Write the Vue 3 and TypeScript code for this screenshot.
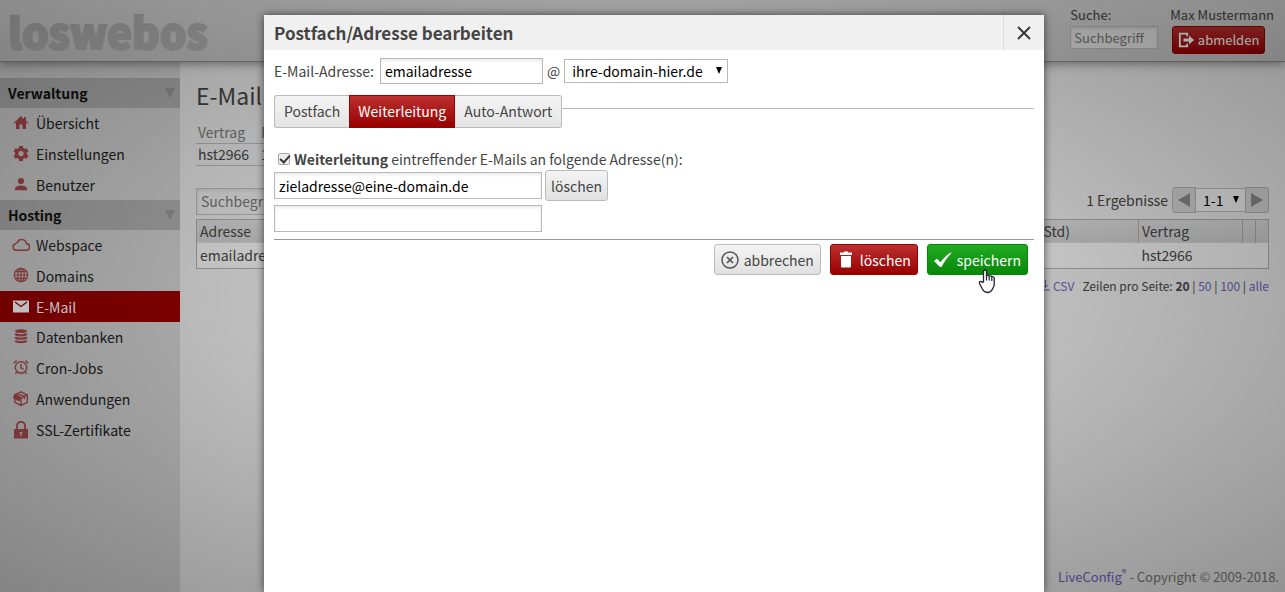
<script setup lang="ts">
import { ref } from 'vue'

type Item = { label: string; icon: string; active?: boolean }
type Group = { title: string; items: Item[] }

const groups: Group[] = [
  {
    title: 'Verwaltung',
    items: [
      { label: 'Übersicht', icon: 'home' },
      { label: 'Einstellungen', icon: 'gear' },
      { label: 'Benutzer', icon: 'user' },
    ],
  },
  {
    title: 'Hosting',
    items: [
      { label: 'Webspace', icon: 'cloud' },
      { label: 'Domains', icon: 'globe' },
      { label: 'E-Mail', icon: 'mail', active: true },
      { label: 'Datenbanken', icon: 'database' },
      { label: 'Cron-Jobs', icon: 'clock' },
      { label: 'Anwendungen', icon: 'box' },
      { label: 'SSL-Zertifikate', icon: 'lock' },
    ],
  },
]

const mailbox = ref('emailadresse')
const domain = ref('ihre-domain-hier.de')
const forward = ref(true)
const target = ref('zieladresse@eine-domain.de')
const extraTarget = ref('')
const tabs = ['Postfach', 'Weiterleitung', 'Auto-Antwort']
const activeTab = ref('Weiterleitung')
</script>

<template>
  <div class="page">
    <header class="top">
      <div class="logo">loswebos</div>
      <div class="search">
        <label for="q">Suche:</label>
        <input id="q" class="field small" type="text" placeholder="Suchbegriff" />
      </div>
      <div class="account">
        <span>Max Mustermann</span>
        <button class="btn red logout" type="button">
          <svg width="18" height="18" viewBox="0 0 18 18" aria-hidden="true">
            <path d="M10 5V2H2v14h8v-3" fill="none" stroke="#fff" stroke-width="2" />
            <path d="M6 7.5h6V4.2L17.5 9 12 13.8v-3.3H6z" fill="#fff" />
          </svg>
          abmelden
        </button>
      </div>
    </header>

    <div class="body">
      <nav class="side">
        <section v-for="g in groups" :key="g.title">
          <h2>{{ g.title }}<svg width="10" height="10" viewBox="0 0 10 10" aria-hidden="true"><path d="M0 0h10L5 10z" fill="#969696" /></svg></h2>
          <ul :class="{ long: g.items.length > 3 }">
            <li v-for="i in g.items" :key="i.label">
              <a href="#" :class="{ active: i.active }">
                <svg class="icon" width="18" height="18" viewBox="0 0 18 18" aria-hidden="true">
                  <path v-if="i.icon === 'home'" d="M9 2L1.5 9.2H4V15h3.5v-4.5h3V15H14V9.2h2.5L14 6.8V3h-2v1.9z" fill="currentColor" />
                  <g v-else-if="i.icon === 'gear'">
                    <circle cx="9" cy="8.5" r="4.3" fill="none" stroke="currentColor" stroke-width="3.4" />
                    <path d="M9 1v2.6M9 13.4V16M2.5 4.7l2.3 1.4M13.2 10.9l2.3 1.4M2.5 12.3l2.3-1.4M13.2 6.1l2.3-1.4" stroke="currentColor" stroke-width="4" />
                  </g>
                  <g v-else-if="i.icon === 'user'" fill="currentColor">
                    <circle cx="9" cy="5" r="3.1" />
                    <path d="M3 14.2v-1.4C3 10.6 6.4 9.6 9 9.6s6 1 6 3.2v1.4z" />
                  </g>
                  <path v-else-if="i.icon === 'cloud'" d="M4.2 14.2h10a3.2 3.2 0 0 0 .3-6.4A4.7 4.7 0 0 0 5.5 6.400 3.200 3.200 0 0 0 3.400 8 3.150 3.150 0 0 0 4.200 14.200z" fill="none" stroke="currentColor" stroke-width="1.4" />
                  <g v-else-if="i.icon === 'globe'" fill="none" stroke="currentColor" stroke-width="1.2">
                    <circle cx="9" cy="8" r="6.7" />
                    <ellipse cx="9" cy="8" rx="3.3" ry="6.7" />
                    <path d="M9 1.3v13.4M2.3 8h13.4M3.3 4.6h11.4M3.3 11.4h11.4" />
                  </g>
                  <g v-else-if="i.icon === 'mail'">
                    <path d="M1 2.5h16v12H1z" fill="currentColor" />
                    <path d="M3 4l6 4.500L15 4" fill="none" stroke="#900" stroke-width="1.300" />
                  </g>
                  <g v-else-if="i.icon === 'database'" fill="none" stroke="currentColor">
                    <ellipse cx="9" cy="3.200" rx="6" ry="1.900" fill="currentColor" stroke="none" />
                    <path d="M3.200 5.800c1.600 2 10 2 11.600 0M3.200 9.200c1.600 2 10 2 11.600 0M3.200 12.600c1.600 2 10 2 11.600 0" stroke-width="2.200" />
                  </g>
                  <g v-else-if="i.icon === 'clock'" fill="none" stroke="currentColor" stroke-width="1.4">
                    <circle cx="9" cy="8.500" r="5.700" />
                    <path d="M9 5v4l2.500 1M1.700 4.200l3-2.600M16.300 4.200l-3-2.600M4.800 13.200l-1.400 1.600M13.200 13.200l1.400 1.600" />
                  </g>
                  <g v-else-if="i.icon === 'box'" stroke="currentColor" stroke-width="1.400" stroke-linejoin="round">
                    <path d="M9 1.800l6.300 3v7.400L9 15.600l-6.300-3.400V4.800zM9 8v7.600M9 8l6.300-3.200M5.800 3.400l6.400 3.200v2.600" fill="none" />
                    <path d="M4.200 4.200L9 7.800 6.800 10.600 1.600 7.400z" fill="currentColor" />
                  </g>
                  <g v-else>
                    <path d="M5 8V4.800a4 4 0 0 1 8 0V8" fill="none" stroke="currentColor" stroke-width="1.800" />
                    <path d="M2 8h14v9.500H2z" fill="currentColor" />
                    <path d="M7.800 11h2.400v1.500H9.600V15H8.400v-2.500h-.6z" fill="#d0d0d0" />
                  </g>
                </svg>
                {{ i.label }}
              </a>
            </li>
          </ul>
        </section>
      </nav>

      <main class="main">
        <h1>E-Mail</h1>
        <table class="contract">
          <thead><tr><th>Vertrag</th><th>Postfächer</th></tr></thead>
          <tbody><tr><td>hst2966</td><td>1</td></tr></tbody>
        </table>
        <div class="tools">
          <input class="field filter" type="text" placeholder="Suchbegriff" aria-label="Suchbegriff" />
          <div class="pager">
            <span>1 Ergebnisse</span>
            <button type="button" class="prev" aria-label="Zurück"><svg width="12" height="14" viewBox="0 0 12 14"><path d="M12 0v14L0 7z" fill="#888" /></svg></button>
            <span class="pick">
              <select aria-label="Seite"><option>1-1</option></select>
              <svg width="6" height="7" viewBox="0 0 6 7" aria-hidden="true"><path d="M0 0h6L3 7z" /></svg>
            </span>
            <button type="button" class="next" aria-label="Weiter"><svg width="12" height="14" viewBox="0 0 12 14"><path d="M0 0v14l12-7z" fill="#888" /></svg></button>
          </div>
        </div>
        <table class="list">
          <colgroup><col /><col class="c-rate" /><col class="c-contract" /><col class="c-icon" /><col class="c-icon" /></colgroup>
          <thead><tr><th>Adresse</th><th>Limit (Std)</th><th>Vertrag</th><th></th><th></th></tr></thead>
          <tbody><tr><td>emailadresse@ihre-domain-hier.de</td><td></td><td>hst2966</td><td></td><td></td></tr></tbody>
        </table>
        <div class="below">
          <a href="#" class="csv"><svg width="9" height="11" viewBox="0 0 9 11" aria-hidden="true"><path d="M4.500 0v7M2 5l2.500 2.500L7 5M0 10h9" fill="none" stroke="currentColor" /></svg> CSV</a>
          <span>Zeilen pro Seite: <b>20</b> | <a href="#">50</a> | <a href="#">100</a> | <a href="#">alle</a></span>
        </div>
        <footer><a href="#">LiveConfig<sup>®</sup></a> - Copyright © 2009-2018.</footer>
      </main>
    </div>

    <div class="shade">
      <section class="dialog" role="dialog" aria-labelledby="dlg">
        <header class="bar">
          <h2 id="dlg">Postfach/Adresse bearbeiten</h2>
          <button type="button" class="close" aria-label="Schließen">
            <svg width="14" height="14" viewBox="0 0 14 14"><path d="M1 1l12 12M13 1L1 13" stroke="#333" stroke-width="1.800" /></svg>
          </button>
        </header>
        <form class="content" @submit.prevent>
          <div class="address">
            <label for="mailbox">E-Mail-Adresse:</label>
            <input id="mailbox" v-model="mailbox" class="field" type="text" />
            <span>@</span>
            <span class="pick domain">
              <select v-model="domain" aria-label="Domain"><option>ihre-domain-hier.de</option></select>
              <svg width="6" height="7" viewBox="0 0 6 7" aria-hidden="true"><path d="M0 0h6L3 7z" /></svg>
            </span>
          </div>
          <div class="tabs">
            <button v-for="t in tabs" :key="t" type="button" :class="{ on: t === activeTab }" @click="activeTab = t">{{ t }}</button>
          </div>
          <div class="check">
            <input id="fwd" v-model="forward" type="checkbox" />
            <label for="fwd"><b>Weiterleitung</b> eintreffender E-Mails an folgende Adresse(n):</label>
          </div>
          <div class="target">
            <input v-model="target" class="field" type="text" aria-label="Zieladresse" />
            <button type="button" class="btn remove">löschen</button>
          </div>
          <div class="target last">
            <input v-model="extraTarget" class="field" type="text" aria-label="Weitere Zieladresse" />
          </div>
          <div class="actions">
            <button type="button" class="btn">
              <svg width="18" height="18" viewBox="0 0 18 18" aria-hidden="true"><circle cx="9" cy="9" r="8" fill="none" stroke="#555" stroke-width="1.500" /><path d="M6 6l6 6M12 6l-6 6" stroke="#555" stroke-width="1.700" /></svg>
              abbrechen
            </button>
            <button type="button" class="btn red">
              <svg width="18" height="18" viewBox="0 0 18 18" aria-hidden="true"><path d="M3 1.500h4v-1h4v1h4V4H3zM4 5h10v10.500a1 1 0 0 1-1 1H5a1 1 0 0 1-1-1z" fill="#fff" /></svg>
              löschen
            </button>
            <button type="submit" class="btn green">
              <svg width="18" height="18" viewBox="0 0 18 18" aria-hidden="true"><path d="M0 10l3-2.200 3.600 3.400C9.500 7 13 3.500 17 1.500l.5.5C13.500 6 10.500 10.500 7.500 16H6z" fill="#fff" /></svg>
              speichern
            </button>
          </div>
        </form>
      </section>
    </div>

    <svg class="pointer" width="18" height="25" viewBox="0 0 18 25" aria-hidden="true">
      <path d="M5.500 13V2.500a1.500 1.500 0 0 1 3 0V7c.5-1 2.500-.8 2.700.5.500-.9 2.400-.7 2.600.6.600-.8 2.400-.5 2.400 1.200v6.200c0 2-1.200 3.500-2 5-1 2-2.500 3-4.700 3-2.500 0-4-1.200-5-3.200l-3-5.800c-.8-1.700 1-2.700 2.200-1.500z" fill="#fff" stroke="#223" stroke-width="1.300" stroke-linejoin="round" />
      <path d="M8.500 7v4.500M11.200 8v3.500M13.800 8.500V12" stroke="#223" stroke-width="1.200" />
    </svg>
  </div>
</template>

<style>
body {
  margin: 0;
}
</style>

<style scoped>
* {
  box-sizing: border-box;
}
.page {
  position: relative;
  display: flex;
  flex-direction: column;
  min-height: 100vh;
  overflow: hidden;
  font: 14px/20px "Noto Sans CJK SC", "Open Sans", sans-serif;
  color: #444;
}
button,
input,
select {
  font: inherit;
  color: inherit;
  margin: 0;
}
a {
  color: #6a62b8;
  text-decoration: none;
}
.top {
  position: relative;
  z-index: 1;
  display: flex;
  height: 62px;
  padding: 0 11px 0 8px;
  background: linear-gradient(#dadada, #c4c4c4);
  border-bottom: 1px solid #8a8a8a;
  box-shadow: 0 1px 10px rgba(0, 0, 0, 0.45);
  font-size: 13px;
}
.logo {
  flex: 1;
  font-size: 42px;
  line-height: 61px;
  font-weight: 900;
  color: #b0b0b0;
  -webkit-text-stroke: 2px #b0b0b0;
}
.search {
  display: flex;
  flex-direction: column;
  width: 88px;
  margin-right: 12px;
  padding-top: 5px;
}
.account {
  display: flex;
  flex-direction: column;
  padding-top: 5px;
}
.search label,
.account span {
  height: 21px;
}
.field {
  height: 27px;
  padding: 0 4px;
  border: 1px solid #b8b8b8;
  border-radius: 0;
  background: #fff;
  box-shadow: inset 0 2px 3px rgba(0, 0, 0, 0.08);
  color: #000;
  outline: 0;
}
.field::placeholder {
  color: #777;
  opacity: 1;
}
.small {
  width: 88px;
  height: 23px;
  padding: 0 3px;
  background: #e4e4e4;
}
.btn {
  display: flex;
  align-items: center;
  gap: 5px;
  height: 31px;
  padding: 0 6px;
  border: 1px solid #bbb;
  border-radius: 3px;
  background: linear-gradient(#f4f4f4, #e0e0e0);
  white-space: nowrap;
}
.remove {
  padding: 0 5px;
}
.red {
  border-color: #900;
  background: linear-gradient(#bb3030, #900);
  color: #fff;
}
.green {
  border-color: #088408;
  background: linear-gradient(#22aa22, #088808);
  color: #fff;
}
.logout {
  width: 93px;
  height: 28px;
  margin-left: 2px;
  padding: 0 5px;
  gap: 3px;
}
.body {
  flex: 1;
  display: flex;
}
.side {
  width: 180px;
  padding-top: 16px;
  background: #cfcfcf;
}
.side h2 {
  display: flex;
  align-items: center;
  justify-content: space-between;
  height: 30px;
  margin: 0;
  padding: 0 5px 0 8px;
  background: #aeaeae;
  color: #111;
  font-size: 14px;
}
.side ul {
  display: grid;
  grid-auto-rows: 1fr;
  height: 92px;
  margin: 0;
  padding: 0;
  list-style: none;
}
.side ul.long {
  height: 215px;
}
.side a {
  display: flex;
  align-items: center;
  gap: 6px;
  height: 100%;
  padding-left: 12px;
  color: #222;
}
.icon {
  color: #aa4a4a;
}
.side a.active,
.side a.active .icon {
  color: #fff;
}
.side a.active {
  background: #900;
}
.main {
  flex: 1;
  display: flex;
  flex-direction: column;
  padding: 16px 16px 0;
  background: #e6e6e6;
}
.main h1 {
  margin: 0;
  font-size: 23px;
  line-height: 35px;
  font-weight: 400;
}
.contract {
  align-self: flex-start;
  margin: 8px 0 21px;
  border-collapse: collapse;
}
.contract th {
  color: #777;
}
.contract th,
.contract td {
  height: 22px;
  padding: 0 10px 0 2px;
  border-bottom: 1px solid #b8b8b8;
  font-weight: 400;
  line-height: 20px;
  text-align: left;
}
.tools {
  display: flex;
  justify-content: space-between;
  height: 32px;
}
.filter {
  width: 150px;
  background: #e6e6e6;
  margin-top: 1px;
}
.pager {
  display: flex;
  align-items: center;
  height: 26px;
}
.pager button {
  display: flex;
  align-items: center;
  justify-content: center;
  width: 24px;
  height: 26px;
  padding: 0;
  border: 1px solid #b0b0b0;
  background: #d2d2d2;
}
.pager .prev {
  margin-left: 4px;
  border-radius: 3px 0 0 3px;
}
.pager .next {
  border-radius: 0 3px 3px 0;
}
.pick {
  position: relative;
  display: flex;
}
.pick select {
  appearance: none;
  width: 49px;
  height: 24px;
  padding: 0 7px;
  border: 1px solid #b8b8b8;
  border-width: 1px 0;
  border-radius: 0;
  background: #eee;
  color: #000;
  outline: 0;
}
.pick svg {
  position: absolute;
  right: 6px;
  top: 8px;
  pointer-events: none;
}
.list {
  width: 100%;
  table-layout: fixed;
  border-collapse: collapse;
  border: 1px solid #aaa;
  line-height: 20px;
}
.c-rate {
  width: 140px;
}
.c-contract {
  width: 104px;
}
.c-icon {
  width: 13px;
}
.list th,
.list td {
  height: 24px;
  padding: 0 3px;
  text-align: left;
  font-weight: 400;
  white-space: nowrap;
}
.list td {
  height: 25px;
  background: #eee;
}
.list th {
  border-right: 1px solid #aaa;
  background: linear-gradient(#d8d8d8, #cacaca);
}
.below {
  display: flex;
  justify-content: flex-end;
  gap: 8px;
  margin-top: 7px;
  font-size: 12px;
}
footer {
  margin: auto -10px 5px 0;
  text-align: right;
  font-size: 13px;
  color: #777;
}
sup {
  font-size: 10px;
  line-height: 0;
}
.shade {
  position: absolute;
  inset: 0;
  z-index: 2;
  display: flex;
  justify-content: center;
  padding: 15px 0 0 23px;
  background: radial-gradient(ellipse, rgba(0, 0, 0, 0.03), rgba(0, 0, 0, 0.36));
}
.dialog {
  width: 780px;
  background: #fff;
  box-shadow: 0 0 8px rgba(0, 0, 0, 0.6);
}
.bar {
  display: flex;
  justify-content: space-between;
  height: 35px;
  background: #f0f0f0;
}
.bar h2 {
  margin: 0;
  padding-left: 10px;
  font-size: 17px;
  line-height: 35px;
}
.close {
  width: 41px;
  padding: 3px 0 0;
  border: 0;
  border-left: 1px solid #ddd;
  background: none;
}
.content {
  padding: 8px 10px 0;
}
.address {
  display: flex;
  align-items: center;
  gap: 4px;
  height: 26px;
}
.address label {
  margin-right: 2px;
}
.address .field {
  width: 163px;
  height: 26px;
}
.domain select {
  width: 164px;
  border-width: 1px;
  background: #fff;
}
.tabs {
  display: flex;
  align-items: center;
  margin: 11px 0 19px;
}
.tabs::after {
  content: "";
  flex: 1;
  height: 1px;
  margin-bottom: 6px;
  background: #bbb;
}
.tabs button {
  height: 33px;
  padding: 0 9px 2px;
  border: 1px solid #bbb;
  background: linear-gradient(#f4f4f4, #e4e4e4);
}
.tabs button:first-child {
  border-right: 0;
  border-radius: 3px 0 0 3px;
}
.tabs button:last-child {
  border-left: 0;
  border-radius: 0 3px 3px 0;
}
.tabs button.on {
  padding: 0 8px 2px;
  border-color: #900;
  background: linear-gradient(#bb3030, #900);
  color: #fff;
}
.check {
  display: flex;
  align-items: center;
  gap: 4px;
  height: 23px;
  padding-left: 4px;
}
.check input {
  appearance: none;
  width: 12px;
  height: 12px;
  border: 1px solid #aaa;
  border-radius: 2px;
  background: #eee;
}
.check input:checked::before {
  content: "";
  display: block;
  width: 8px;
  height: 4px;
  margin: 1px 0 0 1px;
  border: solid #333;
  border-width: 0 0 2px 2px;
  transform: rotate(-48deg);
}
.target {
  display: flex;
  align-items: center;
  gap: 3px;
  height: 31px;
}
.target .field {
  width: 268px;
}
.target.last {
  align-items: flex-start;
  height: 39px;
  padding-top: 4px;
  border-bottom: 1px solid #999;
}
.actions {
  display: flex;
  justify-content: flex-end;
  gap: 9px;
  padding: 4px 6px 0 0;
}
.pointer {
  position: absolute;
  z-index: 3;
  left: 978px;
  top: 269px;
}
</style>
